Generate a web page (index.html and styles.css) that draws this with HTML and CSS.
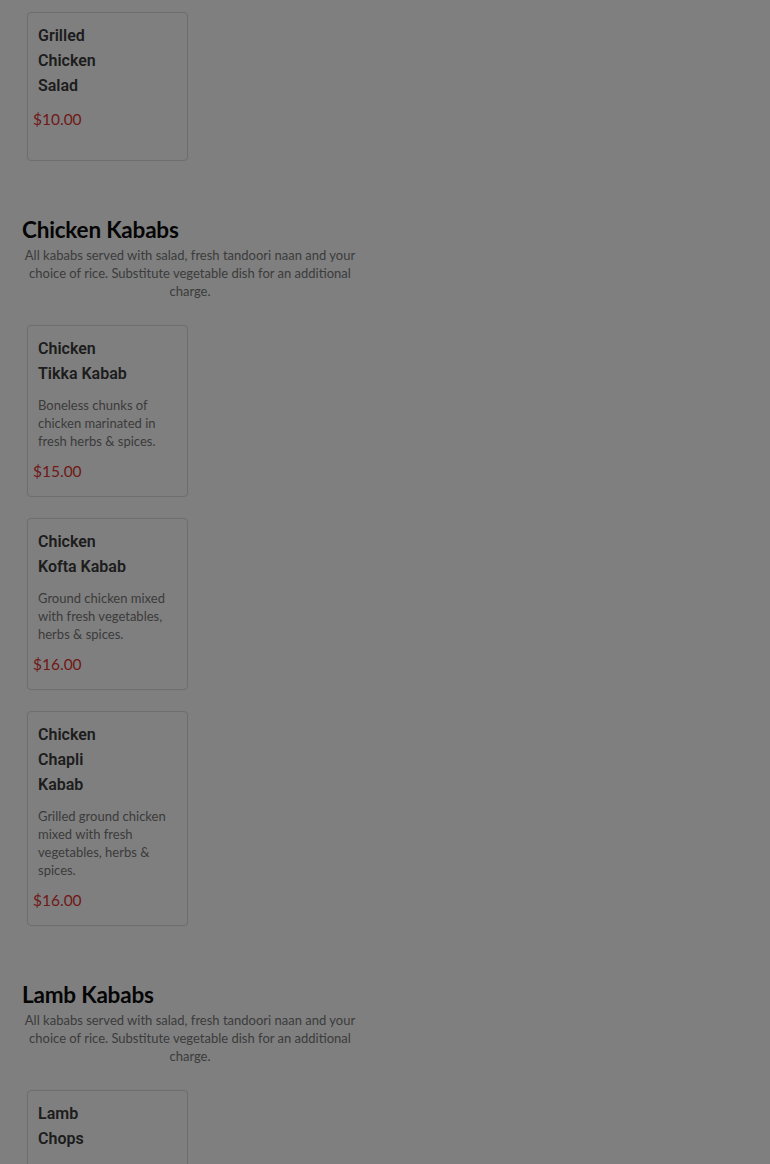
FILE: index.html
```html
<!DOCTYPE html>
<html lang="en">
<head>
<meta charset="utf-8">
<title>Menu</title>
<link rel="stylesheet" href="styles.css">
</head>
<body>
<main class="menu">
  <section class="section first">
    <div class="items">
      <article class="card">
        <h3 class="title">Grilled Chicken Salad</h3>
        <div class="price">$10.00</div>
      </article>
    </div>
  </section>

  <section class="section">
    <h2 class="heading">Chicken Kababs</h2>
    <p class="intro">All kababs served with salad, fresh tandoori naan and your choice of rice. Substitute vegetable dish for an additional charge.</p>
    <div class="items">
      <article class="card">
        <h3 class="title">Chicken Tikka Kabab</h3>
        <p class="desc">Boneless chunks of chicken marinated in fresh herbs &amp; spices.</p>
        <div class="price">$15.00</div>
      </article>
      <article class="card">
        <h3 class="title">Chicken Kofta Kabab</h3>
        <p class="desc">Ground chicken mixed with fresh vegetables, herbs &amp; spices.</p>
        <div class="price">$16.00</div>
      </article>
      <article class="card">
        <h3 class="title">Chicken Chapli Kabab</h3>
        <p class="desc">Grilled ground chicken mixed with fresh vegetables, herbs &amp; spices.</p>
        <div class="price">$16.00</div>
      </article>
    </div>
  </section>

  <section class="section">
    <h2 class="heading">Lamb Kababs</h2>
    <p class="intro">All kababs served with salad, fresh tandoori naan and your choice of rice. Substitute vegetable dish for an additional charge.</p>
    <div class="items">
      <article class="card">
        <h3 class="title">Lamb Chops</h3>
      </article>
    </div>
  </section>
</main>
<div class="backdrop"></div>
</body>
</html>
```

FILE: styles.css
```css
html, body {
  margin: 0;
  padding: 0;
  background: #ffffff;
}
body {
  font-family: "Lato", "Liberation Sans", sans-serif;
  color: #383838;
  overflow: hidden;
  height: 1164px;
}
.menu {
  width: 336px;
  padding: 12px 0 0 22px;
}
.section {
  margin-bottom: 54px;
}
.heading {
  margin: 0;
  font-size: 22.5px;
  line-height: 30px;
  font-weight: 700;
  color: #0a0a0a;
  letter-spacing: -0.2px;
}
.intro {
  margin: 1px 0 25px;
  font-size: 13px;
  line-height: 18px;
  text-align: center;
  color: #787878;
}
.items {
  display: flex;
  flex-direction: column;
  gap: 21px;
  padding-left: 5px;
}
.card {
  box-sizing: border-box;
  width: 161px;
  min-height: 149px;
  border: 1px solid #dcdcdc;
  border-radius: 4px;
  padding: 10px 10px 14px 10px;
  box-shadow: 0 0 2px rgba(0, 0, 0, 0.06);
}
.title {
  margin: 0;
  max-width: 89.3px;
  font-family: "Roboto", "Lato", sans-serif;
  font-size: 16px;
  line-height: 25px;
  font-weight: 600;
  color: #3a3a3a;
}
.desc {
  margin: 10px 0 0;
  font-size: 13px;
  line-height: 18px;
  color: #777777;
}
.price {
  margin: 10px 0 0 -5px;
  font-size: 15.5px;
  line-height: 22px;
  color: #e03434;
}
.backdrop {
  position: fixed;
  inset: 0;
  background: rgba(0, 0, 0, 0.5);
}
```
